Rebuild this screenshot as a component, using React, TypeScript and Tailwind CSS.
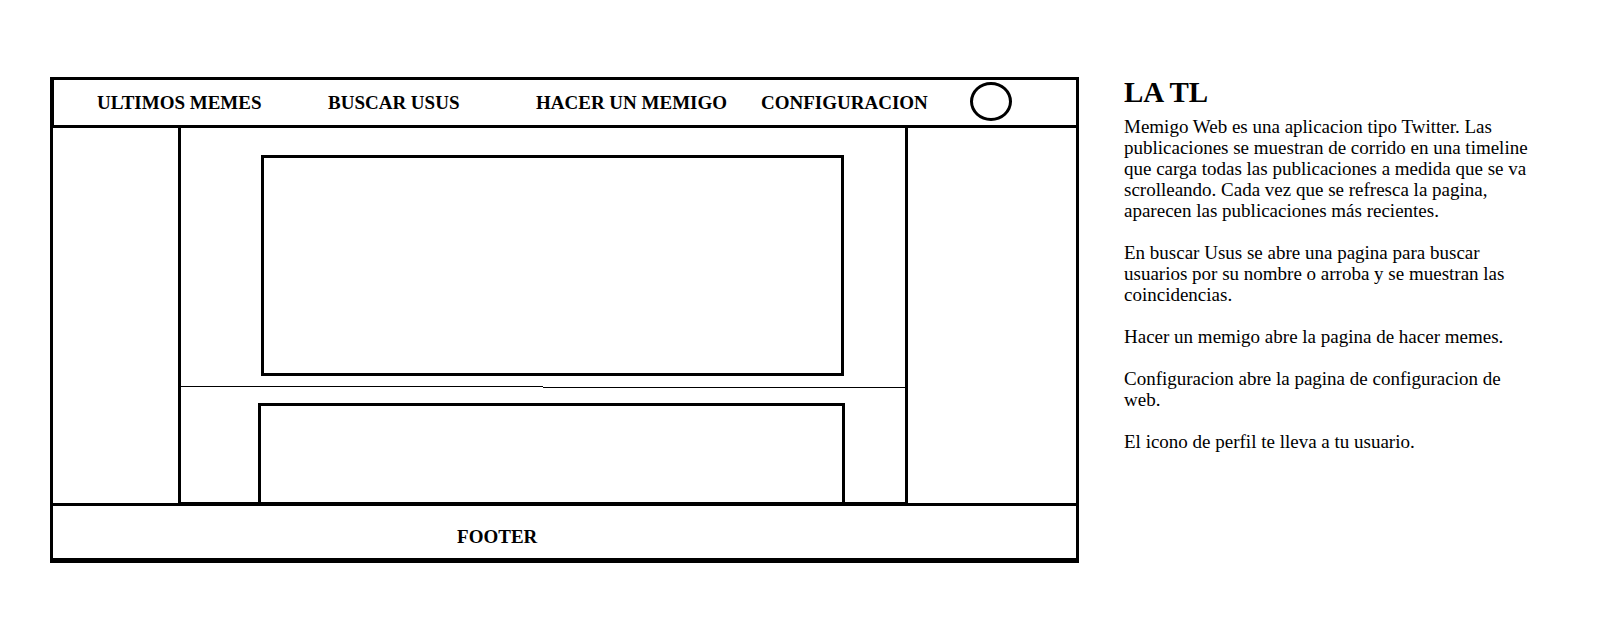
const navItems = [
  { label: "ULTIMOS MEMES", href: "#memes" },
  { label: "BUSCAR USUS", href: "#buscar" },
  { label: "HACER UN MEMIGO", href: "#memigo" },
  { label: "CONFIGURACION", href: "#configuracion" },
];

const notes = [
  "Memigo Web es una aplicacion tipo Twitter. Las publicaciones se muestran de corrido en una timeline que carga todas las publicaciones a medida que se va scrolleando. Cada vez que se refresca la pagina, aparecen las publicaciones más recientes.",
  "En buscar Usus se abre una pagina para buscar usuarios por su nombre o arroba y se muestran las coincidencias.",
  "Hacer un memigo abre la pagina de hacer memes.",
  "Configuracion abre la pagina de configuracion de web.",
  "El icono de perfil te lleva a tu usuario.",
];

function Header() {
  return (
    <header className="border-b-3 border-l border-black">
      <nav className="grid h-[45px] grid-cols-[231fr_208fr_225fr_209fr_106fr] items-center pl-[43px] text-[19px] leading-[21px] font-bold whitespace-nowrap">
        {navItems.map((item) => (
          <a key={item.href} href={item.href}>
            {item.label}
          </a>
        ))}
        <a
          href="#perfil"
          aria-label="Perfil"
          className="mb-[3px] h-[39px] w-[42px] rounded-[50%] border-3 border-black"
        />
      </nav>
    </header>
  );
}

function Timeline() {
  return (
    <div className="grid grid-cols-[125fr_730fr_168fr]">
      <main className="col-start-2 border-x-3 border-b border-black pt-[27px]">
        <article className="mr-[61px] ml-20 h-[221px] border-3 border-black" />
        <div className="mt-[10px] mb-[15px] grid grid-cols-2">
          <div className="border-t border-black" />
          <div className="mt-px border-t border-black" />
        </div>
        <article className="mr-[60px] ml-[77px] h-[99px] border-3 border-b-0 border-black" />
      </main>
    </div>
  );
}

export default function App() {
  return (
    <div className="flex min-h-screen items-start gap-[45px] bg-white pt-[77px] pr-[69px] pb-[76px] pl-[50px] font-['Liberation_Serif',serif] text-black">
      <section className="min-w-0 flex-1 border-3 border-b-5 border-black">
        <Header />
        <Timeline />
        <footer className="flex h-[55px] items-center border-t-3 border-black pt-2 pl-[39.5%] text-[19px] leading-[21px] font-bold">
          FOOTER
        </footer>
      </section>
      <aside className="w-[408px] shrink-0">
        <h1 className="text-[29px] leading-[30px] font-bold">LA TL</h1>
        <div className="mt-[9px] flex flex-col gap-[21px] text-[19px] leading-[21px]">
          {notes.map((note) => (
            <p key={note}>{note}</p>
          ))}
        </div>
      </aside>
    </div>
  );
}
